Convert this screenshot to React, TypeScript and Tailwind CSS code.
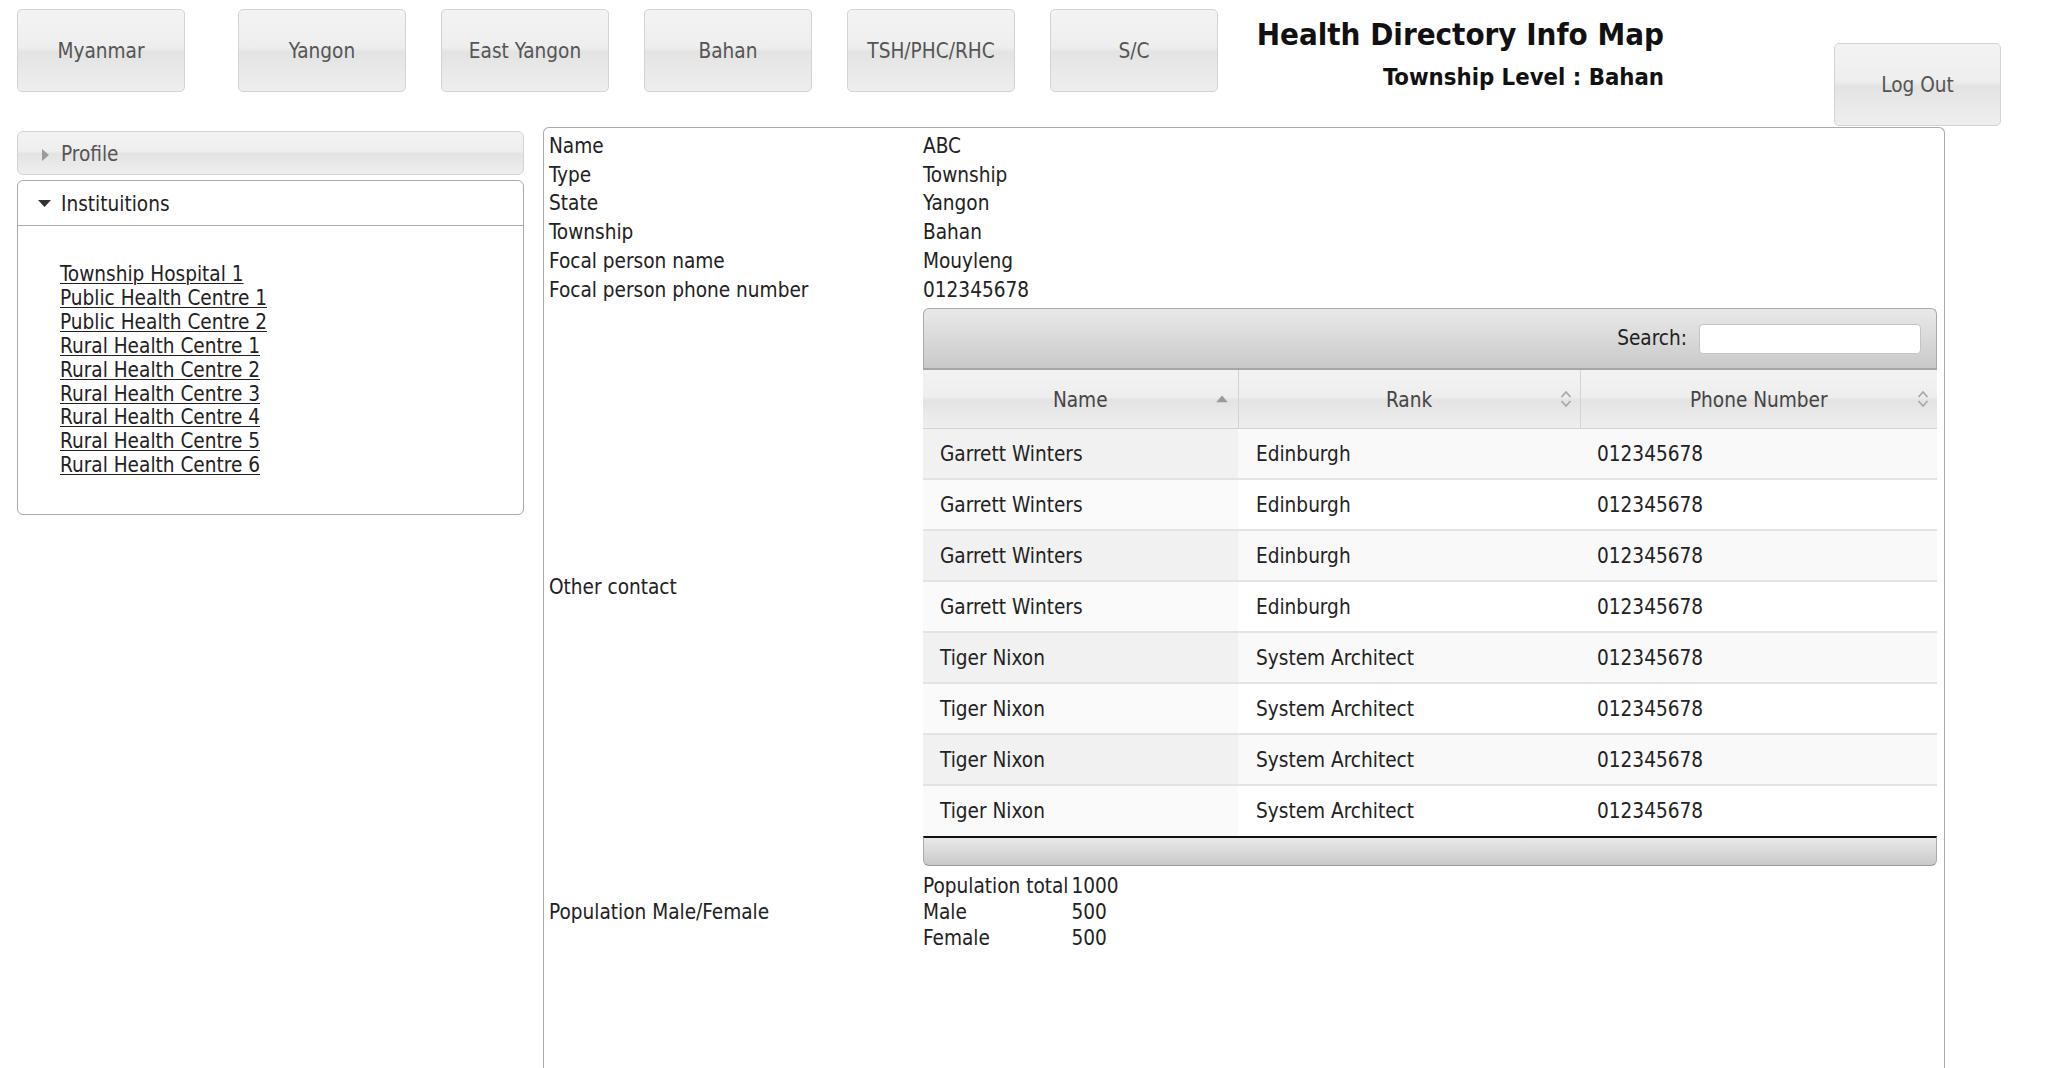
import React from "react";

const navButtons = ["Myanmar", "Yangon", "East Yangon", "Bahan", "TSH/PHC/RHC", "S/C"];

const details = [
  ["Name", "ABC"],
  ["Type", "Township"],
  ["State", "Yangon"],
  ["Township", "Bahan"],
  ["Focal person name", "Mouyleng"],
  ["Focal person phone number", "012345678"],
];

const institutions = [
  "Township Hospital 1",
  "Public Health Centre 1",
  "Public Health Centre 2",
  "Rural Health Centre 1",
  "Rural Health Centre 2",
  "Rural Health Centre 3",
  "Rural Health Centre 4",
  "Rural Health Centre 5",
  "Rural Health Centre 6",
];

const contacts = [
  { name: "Garrett Winters", rank: "Edinburgh", phone: "012345678" },
  { name: "Garrett Winters", rank: "Edinburgh", phone: "012345678" },
  { name: "Garrett Winters", rank: "Edinburgh", phone: "012345678" },
  { name: "Garrett Winters", rank: "Edinburgh", phone: "012345678" },
  { name: "Tiger Nixon", rank: "System Architect", phone: "012345678" },
  { name: "Tiger Nixon", rank: "System Architect", phone: "012345678" },
  { name: "Tiger Nixon", rank: "System Architect", phone: "012345678" },
  { name: "Tiger Nixon", rank: "System Architect", phone: "012345678" },
];

const glass =
  "bg-[linear-gradient(to_bottom,#f3f3f3_0%,#eeeeee_46%,#e3e3e3_52%,#e9e9e9_75%,#eeeeee_100%)]";
const bar = "bg-[linear-gradient(to_bottom,#e9e9e9_0%,#d6d6d6_60%,#c9c9c9_100%)]";

function SortUp() {
  return (
    <svg width="12" height="7" viewBox="0 0 12 7">
      <polygon points="0,7 6,0 12,7" fill="#9a9a9a" />
    </svg>
  );
}

function SortBoth() {
  return (
    <svg width="12" height="18" viewBox="0 0 12 18">
      <polyline points="1.5,7 6,2 10.5,7" fill="none" stroke="#a8a8a8" strokeWidth="1.8" />
      <polyline points="1.5,11 6,16 10.5,11" fill="none" stroke="#a8a8a8" strokeWidth="1.8" />
    </svg>
  );
}

export default function App() {
  return (
    <div className="h-[1068px] overflow-hidden bg-white font-[family-name:'DejaVu_Sans_Condensed',sans-serif] text-[20.6px] text-[#222]">
      {/* top bar */}
      <div className="flex h-[127px] items-start pl-[17px]">
        {navButtons.map((b, i) => (
          <button
            key={b}
            className={`mt-[9px] flex h-[83px] w-[168px] items-center justify-center rounded-[5px] border border-[#d3d3d3] pt-[2px] ${glass} text-[#555] ${
              i === 0 ? "" : i === 1 ? "ml-[53px]" : "ml-[35px]"
            }`}
          >
            {b}
          </button>
        ))}
        <div className="ml-[26px] flex w-[420px] flex-col items-end">
          <h1 className="mt-[16px] text-[31px] leading-[36px] font-bold text-[#111]">Health Directory Info Map</h1>
          <h2 className="mt-[10px] text-[23.7px] leading-[30px] font-bold text-[#111]">Township Level : Bahan</h2>
        </div>
        <button
          className={`ml-[170px] mt-[43px] flex h-[83px] w-[167px] items-center justify-center rounded-[5px] border border-[#d3d3d3] pt-[2px] ${glass} text-[#555]`}
        >
          Log Out
        </button>
      </div>

      <div className="flex h-[941px] items-start pl-[17px]">
        {/* sidebar accordion */}
        <div className="mt-[4px] w-[507px]">
          <div className={`flex h-[44px] items-center rounded-[6px] border border-[#d3d3d3] ${glass} pt-[3px] pl-[24px] text-[#555]`}>
            <svg width="8" height="12" viewBox="0 0 8 12" className="mr-[11px]">
              <polygon points="0,0 7,6 0,12" fill="#9a9a9a" />
            </svg>
            Profile
          </div>
          <div className="mt-[5px] rounded-[6px] border border-[#aaa] bg-white">
            <div className="flex h-[45px] items-center border-b border-[#aaa] pt-[2px] pl-[20px] text-[#222]">
              <svg width="13" height="8" viewBox="0 0 13 8" className="mr-[10px]">
                <polygon points="0,0 13,0 6.5,7" fill="#333" />
              </svg>
              Instituitions
            </div>
            <ul className="pt-[37px] pb-[36px] pl-[42px]">
              {institutions.map((n) => (
                <li key={n} className="leading-[23.9px]">
                  <a href="#" className="text-[#222] underline decoration-1 underline-offset-2">
                    {n}
                  </a>
                </li>
              ))}
            </ul>
          </div>
        </div>

        {/* detail panel */}
        <div className="ml-[19px] h-full w-[1402px] rounded-t-[6px] border border-b-0 border-[#aaa] pt-[4px] pl-[5px]">
          <div className="grid grid-cols-[374px_1fr] items-center">
            {details.map(([k, v]) => (
              <React.Fragment key={k}>
                <div className="leading-[28.7px]">{k}</div>
                <div className="leading-[28.7px]">{v}</div>
              </React.Fragment>
            ))}

            <div className="pt-[4px]">Other contact</div>
            <div className="mt-[4px] mr-[7px]">
              <div className={`flex h-[62px] items-center justify-end rounded-t-[6px] border border-b-2 border-[#aaa] border-b-[#a6a6a6] ${bar} pr-[15px]`}>
                <span className="mr-[12px]">Search:</span>
                <input className="h-[30px] w-[222px] rounded-[4px] border border-[#c4c4c4] bg-white" />
              </div>
              <table className="w-full border-collapse">
                <thead>
                  <tr className={`h-[58px] ${glass}`}>
                    <th className="relative w-[315px] border-r border-b border-[#d3d3d3] pt-[2px] font-normal text-[#444]">
                      Name
                      <span className="absolute top-1/2 right-[10px] -translate-y-1/2 flex">
                        <SortUp />
                      </span>
                    </th>
                    <th className="relative w-[342px] border-r border-b border-[#d3d3d3] pt-[2px] font-normal text-[#444]">
                      Rank
                      <span className="absolute top-1/2 right-[8px] -translate-y-1/2 flex">
                        <SortBoth />
                      </span>
                    </th>
                    <th className="relative border-b border-[#d3d3d3] pt-[2px] font-normal text-[#444]">
                      Phone Number
                      <span className="absolute top-1/2 right-[8px] -translate-y-1/2 flex">
                        <SortBoth />
                      </span>
                    </th>
                  </tr>
                </thead>
                <tbody>
                  {contacts.map((c, i) => {
                    const odd = i % 2 === 0;
                    return (
                      <tr key={i} className={`h-[51px] ${i > 0 ? "border-t-2 border-[#e3e3e3]" : ""} ${odd ? "bg-[#f9f9f9]" : "bg-white"}`}>
                        <td className={`pl-[17px] pt-[1px] ${odd ? "bg-[#f1f1f1]" : "bg-[#fafafa]"}`}>{c.name}</td>
                        <td className="pl-[18px] pt-[1px]">{c.rank}</td>
                        <td className="pl-[17px] pt-[1px]">{c.phone}</td>
                      </tr>
                    );
                  })}
                </tbody>
              </table>
              <div className={`h-[30px] rounded-b-[6px] border-t-2 border-t-[#111] border-x border-b border-x-[#aaa] border-b-[#999] ${bar}`} />
            </div>

            <div className="pt-[8px]">Population Male/Female</div>
            <div className="mt-[7px]">
              <table className="leading-[26px]">
                <tbody>
                  <tr>
                    <td className="pr-[3px]">Population total</td>
                    <td>1000</td>
                  </tr>
                  <tr>
                    <td>Male</td>
                    <td>500</td>
                  </tr>
                  <tr>
                    <td>Female</td>
                    <td>500</td>
                  </tr>
                </tbody>
              </table>
            </div>
          </div>
        </div>
      </div>
    </div>
  );
}
